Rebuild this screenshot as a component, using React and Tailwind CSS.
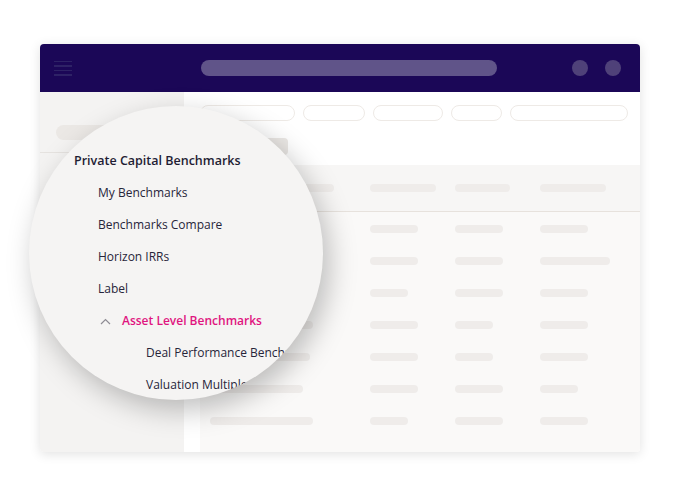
import React from "react";

const headerPills = [124, 66, 55, 66];
const rows = [
  [100, 48, 48, 48],
  [100, 48, 48, 70],
  [100, 38, 48, 48],
  [103, 48, 38, 48],
  [100, 48, 38, 48],
  [93, 48, 48, 38],
  [103, 38, 48, 48],
];

function Bar({ w }) {
  return <div className="h-2 rounded-full bg-[#efecea]" style={{ width: w }} />;
}

function Row({ widths, header }) {
  return (
    <div
      className={
        header
          ? "grid grid-cols-[160px_85px_85px_1fr] items-center pl-[10px] h-[47px] bg-[#f7f6f5] border-b border-[#e7e2dd]"
          : "grid grid-cols-[160px_85px_85px_1fr] items-center pl-[10px] h-8"
      }
    >
      {widths.map((w, i) => (
        <Bar key={i} w={w} />
      ))}
    </div>
  );
}

export default function App() {
  const font = { fontFamily: '"Open Sans", "Noto Sans", sans-serif' };
  return (
    <div className="relative w-[680px] h-[496px] bg-white overflow-hidden">
      <div className="pt-[44px] pl-[40px]">
        <div className="w-[600px] h-[408px] rounded-[4px] overflow-hidden bg-white shadow-[0_2px_12px_rgba(0,0,0,0.12)] flex flex-col">
          {/* top bar */}
          <div className="h-12 bg-[#1b0757] flex items-center shrink-0">
            <div className="w-[144px] pl-[14px]">
              <div className="w-[18px] flex flex-col gap-[3px]">
                <div className="h-[1.5px] bg-[#2e2266]" />
                <div className="h-[1.5px] bg-[#2e2266]" />
                <div className="h-[1.5px] bg-[#2e2266]" />
                <div className="h-[1.5px] bg-[#2e2266]" />
              </div>
            </div>
            <div className="ml-[17px] w-[296px] h-4 rounded-full bg-[#605489]" />
            <div className="flex-1" />
            <div className="w-4 h-4 rounded-full bg-[#4f4179]" />
            <div className="ml-[17px] mr-[19px] w-4 h-4 rounded-full bg-[#4f4179]" />
          </div>
          <div className="flex flex-1">
            {/* sidebar */}
            <div className="w-[144px] bg-[#f4f3f2]">
              <div className="h-[61px] border-b border-[#e6e3e0] pt-[33px] pl-[16px]">
                <div className="w-[100px] h-[15px] rounded-full bg-[#ebe8e5]" />
              </div>
            </div>
            {/* main */}
            <div className="flex-1 flex flex-col pl-4 bg-white">
              <div className="h-[73px] pt-[13px]">
                <div className="flex gap-2">
                  {[95, 62, 70, 51, 118].map((w, i) => (
                    <div
                      key={i}
                      className="h-4 rounded-full border-[1.5px] border-[#eeeae6]"
                      style={{ width: w }}
                    />
                  ))}
                </div>
                <div className="mt-[17px] w-[88px] h-[17px] rounded-[4px] bg-[#ebe8e5]" />
              </div>
              <div className="flex-1 bg-[#faf9f8]">
                <Row widths={headerPills} header />
                <div className="pt-[1px]">
                  {rows.map((r, i) => (
                    <Row key={i} widths={r} />
                  ))}
                </div>
              </div>
            </div>
          </div>
        </div>
      </div>

      {/* magnifier */}
      <div
        className="absolute left-[29px] top-[106px] w-[294px] h-[294px] rounded-full overflow-hidden bg-[#f5f4f3] shadow-[6px_10px_28px_rgba(0,0,0,0.25)]"
        style={font}
      >
        <div className="pt-[39px] whitespace-nowrap text-[#27253a]">
          <div className="h-8 flex items-center pl-[45px] text-[12.5px] font-semibold text-[#1f1d33]">
            Private Capital Benchmarks
          </div>
          <div className="h-8 flex items-center pl-[69px] text-[12px]">My Benchmarks</div>
          <div className="h-8 flex items-center pl-[69px] text-[12px]">Benchmarks Compare</div>
          <div className="h-8 flex items-center pl-[69px] text-[12px]">Horizon IRRs</div>
          <div className="h-8 flex items-center pl-[69px] text-[12px]">Label</div>
          <div className="h-8 flex items-center pl-[71px] text-[12px] font-semibold text-[#e0147f]">
            <svg width="11" height="7" viewBox="0 0 11 7" className="mr-[11px]">
              <path d="M1 6 L5.5 1.5 L10 6" fill="none" stroke="#8e8c94" strokeWidth="1.2" />
            </svg>
            Asset Level Benchmarks
          </div>
          <div className="h-8 flex items-center pl-[117px] text-[12px]">Deal Performance Benchmarks</div>
          <div className="h-8 flex items-center pl-[117px] text-[12px]">Valuation Multiples</div>
        </div>
      </div>
    </div>
  );
}
